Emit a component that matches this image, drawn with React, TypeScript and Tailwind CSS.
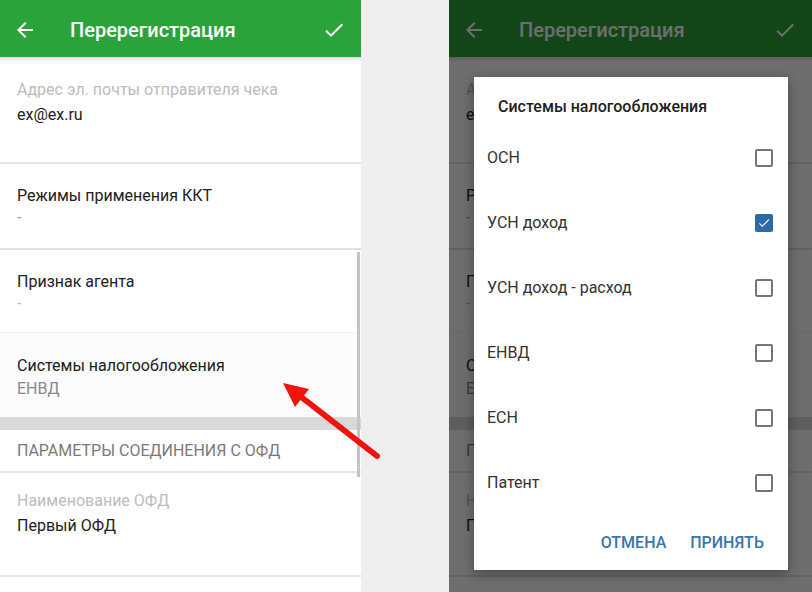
import React from "react"

type FieldProps = {
  label: string
  value: string
  labelClass: string
  valueClass: string
  box: string
  gap: string
}

function Field({ label, value, labelClass, valueClass, box, gap }: FieldProps) {
  return (
    <div className={box}>
      <div className={`text-[16px] leading-[20px] ${labelClass}`}>{label}</div>
      <div className={`${gap} text-[16px] leading-[20px] ${valueClass}`}>{value}</div>
    </div>
  )
}

function Screen() {
  return (
    <div className="flex h-full flex-col bg-white">
      {/* Toolbar */}
      <div className="flex h-[57px] shrink-0 items-center bg-[#2ba33b] pl-[13px] pr-[15px] pt-[3px] text-white">
        <svg width="24" height="24" viewBox="0 0 24 24" fill="currentColor">
          <path d="M20 11H7.83l5.59-5.59L12 4l-8 8 8 8 1.41-1.41L7.83 13H20v-2z" />
        </svg>
        <div className="ml-[33px] flex-1 text-[20px] font-medium leading-[24px]">Перерегистрация</div>
        <svg width="24" height="24" viewBox="0 0 24 24" fill="currentColor">
          <path d="M9 16.17L4.83 12l-1.42 1.41L9 19 21 7l-1.41-1.41z" />
        </svg>
      </div>
      <div className="h-[5px] shrink-0 bg-gradient-to-b from-[#dcdcdc] to-white" />

      <Field
        box="h-[102px] shrink-0 border-b-2 border-[#e6e6e6] px-[17px] pt-[18px]"
        gap="mt-[5px]"
        label="Адрес эл. почты отправителя чека"
        labelClass="text-[#bdbdbd]"
        value="ex@ex.ru"
        valueClass="text-[#212121]"
      />
      <Field
        box="h-[86px] shrink-0 border-b-2 border-[#e0e0e0] px-[17px] pt-[22px]"
        gap="mt-[2px]"
        label="Режимы применения ККТ"
        labelClass="text-[#212121]"
        value="-"
        valueClass="text-[#9e9e9e]"
      />
      <Field
        box="h-[82px] shrink-0 px-[17px] pt-[22px]"
        gap="mt-[2px]"
        label="Признак агента"
        labelClass="text-[#212121]"
        value="-"
        valueClass="text-[#bdbdbd]"
      />
      <Field
        box="h-[85px] shrink-0 border-t border-[#f2f2f2] bg-[#fcfcfc] px-[17px] pt-[23px]"
        gap="mt-[3px]"
        label="Системы налогообложения"
        labelClass="text-[#212121]"
        value="ЕНВД"
        valueClass="text-[#8a8a8a]"
      />
      <div className="h-[13px] shrink-0 bg-[#d9d9d9]" />
      <div className="flex h-[43px] shrink-0 items-center border-b-2 border-[#e6e6e6] px-[17px] text-[16px] uppercase text-[#7a7a7a]">
        Параметры соединения с ОФД
      </div>
      <Field
        box="h-[104px] shrink-0 border-b-2 border-[#e6e6e6] px-[17px] pt-[18px]"
        gap="mt-[5px]"
        label="Наименование ОФД"
        labelClass="text-[#bdbdbd]"
        value="Первый ОФД"
        valueClass="text-[#212121]"
      />
      <div className="flex-1" />
    </div>
  )
}

function CheckBox({ checked }: { checked?: boolean }) {
  if (checked) {
    return (
      <div className="flex h-[18px] w-[18px] items-center justify-center rounded-[2px] bg-[#2b6aa5]">
        <svg width="14" height="14" viewBox="0 0 24 24" fill="white">
          <path d="M9 16.17L4.83 12l-1.42 1.41L9 19 21 7l-1.41-1.41z" />
        </svg>
      </div>
    )
  }
  return <div className="h-[18px] w-[18px] rounded-[2px] border-2 border-[#767676]" />
}

const options = [
  { name: "ОСН", checked: false },
  { name: "УСН доход", checked: true },
  { name: "УСН доход - расход", checked: false },
  { name: "ЕНВД", checked: false },
  { name: "ЕСН", checked: false },
  { name: "Патент", checked: false },
]

export default function App() {
  return (
    <div className="relative flex h-[592px] w-[812px] overflow-hidden bg-[#efefef] font-['Roboto',sans-serif]">
      {/* Left phone */}
      <div className="relative h-full w-[361px] shrink-0">
        <Screen />
        {/* scroll indicator */}
        <div className="absolute left-[357px] top-[252px] h-[225px] w-[3px] bg-[#c4c4c4]" />
      </div>

      <div className="w-[88px] shrink-0" />

      {/* Right phone with dialog */}
      <div className="relative h-full w-[363px] shrink-0">
        <Screen />
        <div className="absolute inset-0 bg-black/[0.57]" />

        <div className="absolute left-[25px] top-[77px] flex h-[493px] w-[314px] flex-col bg-white shadow-[0_4px_12px_rgba(0,0,0,0.35)]">
          <div className="pl-[24px] pt-[20px] text-[16px] font-medium leading-[20px] text-[#212121]">
            Системы налогообложения
          </div>
          <div className="mt-[8px] flex flex-col">
            {options.map((o) => (
              <div key={o.name} className="flex h-[65px] items-center justify-between pl-[13px] pr-[15px]">
                <span className="text-[16px] text-[#333333]">{o.name}</span>
                <CheckBox checked={o.checked} />
              </div>
            ))}
          </div>
          <div className="mt-[10px] flex h-[36px] items-center justify-end gap-[24px] pr-[24px] text-[16px] font-medium text-[#3a76a9]">
            <span>ОТМЕНА</span>
            <span>ПРИНЯТЬ</span>
          </div>
        </div>
      </div>

      {/* Red annotation arrow */}
      <svg className="absolute left-[270px] top-[370px]" width="115" height="95" viewBox="0 0 115 95">
        <line x1="107" y1="86" x2="30" y2="26" stroke="#f2120e" strokeWidth="6" strokeLinecap="round" />
        <polygon points="13,13 39,19 25,37" fill="#f2120e" />
      </svg>
    </div>
  )
}
